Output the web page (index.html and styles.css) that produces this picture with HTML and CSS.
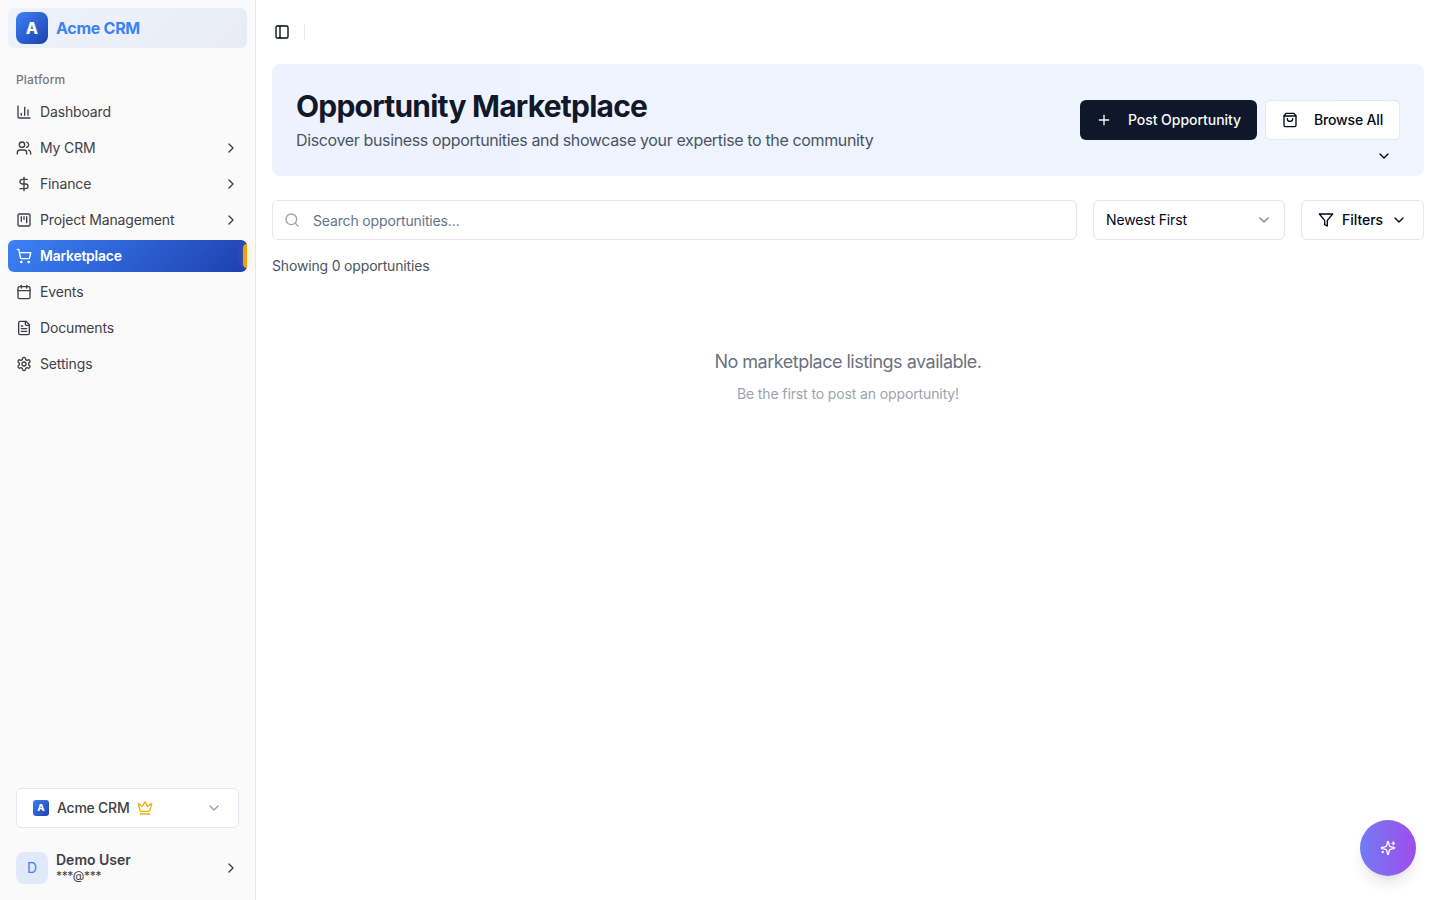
FILE: index.html
```html
<!DOCTYPE html>
<html lang="en">
<head>
<meta charset="utf-8">
<title>Opportunity Marketplace</title>
<link rel="stylesheet" href="styles.css">
</head>
<body>
<svg class="sprite" aria-hidden="true">
  <symbol id="chev-right" viewBox="0 0 24 24"><path d="m9 18 6-6-6-6"/></symbol>
  <symbol id="chev-down" viewBox="0 0 24 24"><path d="m6 9 6 6 6-6"/></symbol>
</svg>
<div class="app">
  <aside class="sidebar">
    <div class="brand"><span class="logo">A</span><span class="brand-name">Acme CRM</span></div>
    <div class="nav-label">Platform</div>
    <nav class="nav">
      <a class="item"><svg class="icon" viewBox="0 0 24 24"><path d="M3 3v16a2 2 0 0 0 2 2h16"/><path d="M18 17V9"/><path d="M13 17V5"/><path d="M8 17v-3"/></svg><span>Dashboard</span></a>
      <a class="item"><svg class="icon" viewBox="0 0 24 24"><path d="M16 21v-2a4 4 0 0 0-4-4H6a4 4 0 0 0-4 4v2"/><circle cx="9" cy="7" r="4"/><path d="M22 21v-2a4 4 0 0 0-3-3.87"/><path d="M16 3.13a4 4 0 0 1 0 7.75"/></svg><span>My CRM</span><svg class="icon end"><use href="#chev-right"/></svg></a>
      <a class="item"><svg class="icon" viewBox="0 0 24 24"><path d="M12 2v20"/><path d="M17 5H9.500a3.500 3.500 0 0 0 0 7h5a3.500 3.500 0 0 1 0 7H6"/></svg><span>Finance</span><svg class="icon end"><use href="#chev-right"/></svg></a>
      <a class="item"><svg class="icon" viewBox="0 0 24 24"><rect width="18" height="18" x="3" y="3" rx="2"/><path d="M8 7v7"/><path d="M12 7v4"/><path d="M16 7v9"/></svg><span>Project Management</span><svg class="icon end"><use href="#chev-right"/></svg></a>
      <a class="item active"><svg class="icon" viewBox="0 0 24 24"><circle cx="8" cy="21" r="1"/><circle cx="19" cy="21" r="1"/><path d="M2.050 2.050h2l2.660 12.420a2 2 0 0 0 2 1.580h9.780a2 2 0 0 0 1.950-1.570l1.650-7.430H5.120"/></svg><span>Marketplace</span></a>
      <a class="item"><svg class="icon" viewBox="0 0 24 24"><path d="M8 2v4"/><path d="M16 2v4"/><rect width="18" height="18" x="3" y="4" rx="2"/><path d="M3 10h18"/></svg><span>Events</span></a>
      <a class="item"><svg class="icon" viewBox="0 0 24 24"><path d="M15 2H6a2 2 0 0 0-2 2v16a2 2 0 0 0 2 2h12a2 2 0 0 0 2-2V7Z"/><path d="M14 2v4a2 2 0 0 0 2 2h4"/><path d="M10 9H8"/><path d="M16 13H8"/><path d="M16 17H8"/></svg><span>Documents</span></a>
      <a class="item"><svg class="icon" viewBox="0 0 24 24"><path d="M12.220 2h-.44a2 2 0 0 0-2 2v.18a2 2 0 0 1-1 1.730l-.43.250a2 2 0 0 1-2 0l-.15-.080a2 2 0 0 0-2.730.730l-.22.380a2 2 0 0 0 .730 2.730l.150.100a2 2 0 0 1 1 1.720v.51a2 2 0 0 1-1 1.740l-.15.090a2 2 0 0 0-.73 2.730l.22.380a2 2 0 0 0 2.730.730l.150-.080a2 2 0 0 1 2 0l.430.250a2 2 0 0 1 1 1.730V20a2 2 0 0 0 2 2h.44a2 2 0 0 0 2-2v-.18a2 2 0 0 1 1-1.730l.430-.250a2 2 0 0 1 2 0l.150.080a2 2 0 0 0 2.730-.730l.220-.390a2 2 0 0 0-.730-2.730l-.150-.080a2 2 0 0 1-1-1.740v-.5a2 2 0 0 1 1-1.740l.150-.090a2 2 0 0 0 .730-2.730l-.220-.380a2 2 0 0 0-2.730-.730l-.150.080a2 2 0 0 1-2 0l-.430-.250a2 2 0 0 1-1-1.730V4a2 2 0 0 0-2-2z"/><circle cx="12" cy="12" r="3"/></svg><span>Settings</span></a>
    </nav>
    <div class="side-foot">
      <div class="workspace"><span class="logo small">A</span><span>Acme CRM</span><svg class="icon crown" viewBox="0 0 24 24"><path d="M11.562 3.266a.5.5 0 0 1 .876 0L15.390 8.870a1 1 0 0 0 1.516.294L21.183 5.500a.5.5 0 0 1 .798.519l-2.834 10.246a1 1 0 0 1-.956.734H5.810a1 1 0 0 1-.957-.734L2.020 6.020a.5.5 0 0 1 .798-.519l4.276 3.664a1 1 0 0 0 1.516-.294z"/><path d="M5 21h14"/></svg><svg class="icon end muted"><use href="#chev-down"/></svg></div>
      <div class="user"><span class="avatar">D</span><div class="user-text"><span class="user-name">Demo User</span><span class="user-mail">***@***</span></div><svg class="icon end"><use href="#chev-right"/></svg></div>
    </div>
  </aside>
  <main class="main">
    <header class="topbar"><svg class="icon" viewBox="0 0 24 24"><rect width="18" height="18" x="3" y="3" rx="2"/><path d="M9 3v18"/></svg><span class="divider"></span></header>
    <section class="banner">
      <div><h1>Opportunity Marketplace</h1><p class="lead">Discover business opportunities and showcase your expertise to the community</p></div>
      <div class="actions">
        <button class="btn primary"><svg class="icon" viewBox="0 0 24 24"><path d="M5 12h14"/><path d="M12 5v14"/></svg>Post Opportunity</button>
        <button class="btn browse"><svg class="icon" viewBox="0 0 24 24"><path d="M6 2 3 6v14a2 2 0 0 0 2 2h14a2 2 0 0 0 2-2V6l-3-4Z"/><path d="M3 6h18"/><path d="M16 10a4 4 0 0 1-8 0"/></svg>Browse All</button>
      </div>
      <svg class="icon collapse"><use href="#chev-down"/></svg>
    </section>
    <div class="controls">
      <div class="field search"><svg class="icon" viewBox="0 0 24 24"><circle cx="11" cy="11" r="8"/><path d="m21 21-4.300-4.300"/></svg><span>Search opportunities...</span></div>
      <div class="field select"><span>Newest First</span><svg class="icon end muted"><use href="#chev-down"/></svg></div>
      <button class="btn filters"><svg class="icon" viewBox="0 0 24 24"><path d="M22 3H2l8 9.460V19l4 2v-8.540z"/></svg>Filters<svg class="icon"><use href="#chev-down"/></svg></button>
    </div>
    <p class="count">Showing 0 opportunities</p>
    <div class="empty"><p class="empty-title">No marketplace listings available.</p><p class="empty-sub">Be the first to post an opportunity!</p></div>
  </main>
</div>
<button class="fab" aria-label="Assistant"><svg class="icon" viewBox="0 0 24 24"><path d="M9.937 15.500A2 2 0 0 0 8.500 14.063l-6.135-1.582a.5.5 0 0 1 0-.962L8.500 9.936A2 2 0 0 0 9.937 8.500l1.582-6.135a.5.5 0 0 1 .963 0L14.063 8.500A2 2 0 0 0 15.500 9.937l6.135 1.581a.5.5 0 0 1 0 .964L15.500 14.063a2 2 0 0 0-1.437 1.437l-1.582 6.135a.5.5 0 0 1-.963 0z"/><path d="M20 3v4"/><path d="M22 5h-4"/><path d="M4 17v2"/><path d="M5 18H3"/></svg></button>
</body>
</html>
```
FILE: styles.css
```css
* { box-sizing: border-box; }
body { margin: 0; font-family: Inter, "Liberation Sans", sans-serif; font-size: 14px; line-height: 20px; letter-spacing: -.15px; color: #020817; background: #fff; }
h1, p { margin: 0; }
.sprite { position: absolute; width: 0; height: 0; }
.icon { width: 16px; height: 16px; flex: none; fill: none; stroke: currentColor; stroke-width: 2; stroke-linecap: round; stroke-linejoin: round; }
.end { margin-left: auto; }
.muted { opacity: .5; }
.app { display: flex; height: 100vh; }

.sidebar { width: 256px; flex: none; display: flex; flex-direction: column; padding: 8px; background: #fafafa; border-right: 1px solid #e2e8f0; color: #3f3f46; }
.brand { display: flex; align-items: center; gap: 8px; height: 40px; padding: 0 8px; border-radius: 6px; background: linear-gradient(135deg, #edf2fb, #e9ecf4); }
.logo { display: flex; align-items: center; justify-content: center; width: 32px; height: 32px; border-radius: 8px; background: linear-gradient(135deg, #3b82f6, #1e40af); color: #fff; font-size: 16px; font-weight: 800; letter-spacing: 0; }
.logo.small { width: 16px; height: 16px; border-radius: 3px; font-size: 9.600px; }
.brand-name { font-size: 16px; font-weight: 700; color: #3b82f6; letter-spacing: -.27px; }
.nav-label { height: 32px; margin-top: 16px; padding: 0 8px; font-size: 12px; font-weight: 500; line-height: 32px; letter-spacing: .15px; color: #77777c; }
.nav { display: flex; flex-direction: column; gap: 4px; }
.item { position: relative; display: flex; align-items: center; gap: 8px; height: 32px; padding: 0 8px; border-radius: 6px; }
.active { background: linear-gradient(135deg, #3b82f6, #1e40af); color: #fff; font-weight: 600; letter-spacing: -.25px; }
.active::after { content: ""; position: absolute; right: 0; top: 4px; bottom: 4px; width: 4px; border-radius: 4px 0 0 4px; background: #f59e0b; box-shadow: 0 0 8px #f59e0b4d; }
.side-foot { margin-top: auto; padding: 0 8px; }
.workspace { display: flex; align-items: center; gap: 8px; height: 40px; padding: 0 16px; border: 1px solid #e2e8f0; border-radius: 6px; background: #fff; font-weight: 500; letter-spacing: -.24px; }
.crown { color: #eab308; }
.user { display: flex; align-items: center; gap: 8px; height: 48px; margin: 16px 0 0; }
.avatar { display: flex; align-items: center; justify-content: center; width: 32px; height: 32px; border-radius: 8px; background: #e0e9f9; color: #3b82f6; }
.user-text { display: flex; flex-direction: column; }
.user-name { font-weight: 600; line-height: 17.500px; letter-spacing: 0; margin-top: -1px; }
.user-mail { font-size: 12px; line-height: 16px; letter-spacing: -.35px; }

.main { flex: 1; min-width: 0; padding: 0 16px; }
.topbar { display: flex; align-items: center; gap: 14px; height: 64px; padding-left: 2px; }
.divider { width: 1px; height: 16px; background: #e2e8f0; }
.banner { position: relative; display: flex; align-items: center; justify-content: space-between; height: 112px; padding: 0 24px; border-radius: 8px; background: linear-gradient(to right, #eef2ff, #eff6ff); }
h1 { font-size: 30px; font-weight: 700; line-height: 36px; letter-spacing: -.78px; color: #111827; }
.lead { margin-top: 4px; font-size: 16px; line-height: 24px; letter-spacing: -.362px; color: #4b5563; }
.actions { display: flex; gap: 8px; }
.btn { display: flex; align-items: center; gap: 16px; height: 40px; padding: 0 16px; border: 1px solid #e2e8f0; border-radius: 6px; background: #fff; color: #020817; font: 500 14px/20px Inter, "Liberation Sans", sans-serif; letter-spacing: -.04px; }
.primary { border: 0; background: #0f172a; color: #f8fafc; }
.browse { letter-spacing: -.17px; }
.collapse { position: absolute; right: 32px; bottom: 12px; }
.controls { display: flex; gap: 16px; margin-top: 24px; }
.field { display: flex; align-items: center; height: 40px; padding: 0 12px; border: 1px solid #e2e8f0; border-radius: 6px; background: #fff; }
.search { flex: 1; gap: 13px; padding: 1px 12px 0 11px; color: #64748b; }
.search .icon { color: #9ca3af; margin-top: -1px; }
.select { width: 192px; }
.filters { width: 123px; gap: 8px; }
.count { margin-top: 16px; letter-spacing: -.17px; color: #4b5563; }
.empty { padding-top: 72px; text-align: center; }
.empty-title { font-size: 18px; line-height: 28px; letter-spacing: -.5px; color: #6b7280; }
.empty-sub { margin-top: 8px; letter-spacing: -.12px; color: #9ca3af; }
.fab { position: fixed; right: 24px; bottom: 24px; display: flex; align-items: center; justify-content: center; width: 56px; height: 56px; padding: 0; border: 0; border-radius: 50%; background: linear-gradient(to right, #717cf2, #a24bed); color: #fff; box-shadow: 0 10px 15px -3px #0000001a, 0 4px 6px -4px #0000001a; }
```
